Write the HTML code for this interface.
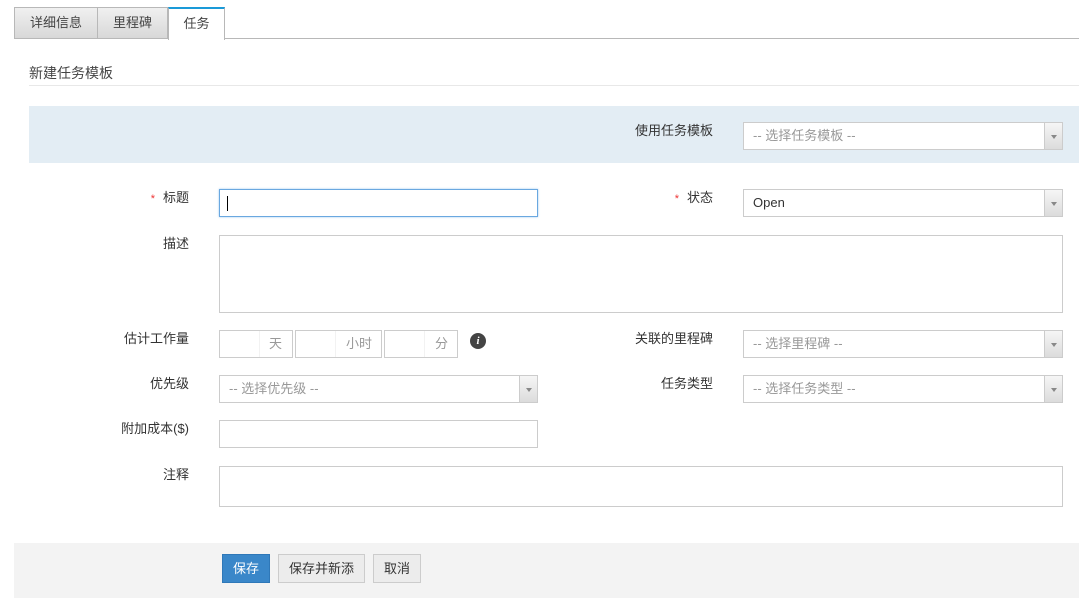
<!DOCTYPE html>
<html><head><meta charset="utf-8"><style>
*{box-sizing:border-box;margin:0;padding:0}
body{width:1079px;height:598px;background:#fff;position:relative;overflow:hidden;font-family:"Liberation Sans","Noto Sans CJK SC",sans-serif;font-size:13px;color:#333}
.a{position:absolute}
.tab{position:absolute;top:7px;height:32px;border:1px solid #b8b8b8;background:linear-gradient(#f0f0f0,#d8d8d8);text-align:center;line-height:30px;color:#444;font-size:13px}
.lbl{position:absolute;text-align:right;color:#333;font-size:13px;line-height:18px}
.lbl b{color:#e33;font-weight:normal;font-size:11px;margin-right:8px}
.in{position:absolute;border:1px solid #ccc;background:#fff}
.sel{position:absolute;border:1px solid #ccc;background:#fff;height:28px;line-height:26px;padding-left:9px;color:#999;font-size:13px}
.sel .arr{position:absolute;right:0;top:0;width:18px;height:26px;border-left:1px solid #ccc;background:linear-gradient(#f6f6f6,#dcdcdc)}
.sel .arr:after{content:"";position:absolute;left:6px;top:12px;border-left:3px solid transparent;border-right:3px solid transparent;border-top:4px solid #888}
.btn{position:absolute;top:554px;height:29px;border:1px solid #ccc;background:#ececec;line-height:27px;text-align:center;font-size:13px;color:#333}
.unit{position:absolute;color:#999;font-size:13px;line-height:26px}
</style></head><body>
<div class="tab" style="left:14px;width:84px">详细信息</div>
<div class="tab" style="left:97px;width:71px">里程碑</div>
<div class="a" style="left:168px;top:7px;width:57px;height:33px;background:#fff;border:1px solid #b8b8b8;border-top:2px solid #1a9ad8;border-bottom:none;text-align:center;line-height:30px;color:#444">任务</div>
<div class="a" style="left:224px;top:38px;width:855px;height:1px;background:#b8b8b8"></div>
<div class="a" style="left:29px;top:63px;font-size:14px;color:#444">新建任务模板</div>
<div class="a" style="left:29px;top:85px;width:1050px;height:1px;background:#e8e8e8"></div>
<div class="a" style="left:29px;top:106px;width:1050px;height:57px;background:#e3edf4"></div>
<div class="lbl" style="left:560px;width:153px;top:122px">使用任务模板</div>
<div class="sel" style="left:743px;top:122px;width:320px">-- 选择任务模板 --<span class="arr"></span></div>

<div class="lbl" style="left:60px;width:129px;top:189px"><b>*</b>标题</div>
<div class="in" style="left:219px;top:189px;width:319px;height:28px;border-color:#6aa8e0;box-shadow:0 0 2px #9cc7ee"><div class="a" style="left:7px;top:6px;width:1px;height:15px;background:#000"></div></div>
<div class="lbl" style="left:560px;width:153px;top:189px"><b>*</b>状态</div>
<div class="sel" style="left:743px;top:189px;width:320px;color:#333">Open<span class="arr"></span></div>

<div class="lbl" style="left:60px;width:129px;top:235px">描述</div>
<div class="in" style="left:219px;top:235px;width:844px;height:78px"></div>

<div class="lbl" style="left:60px;width:129px;top:330px">估计工作量</div>
<div class="in" style="left:219px;top:330px;width:74px;height:28px"><div class="a" style="left:39px;top:0;width:1px;height:26px;background:#f2f2f2"></div><span class="unit" style="left:49px">天</span></div>
<div class="in" style="left:295px;top:330px;width:87px;height:28px"><div class="a" style="left:39px;top:0;width:1px;height:26px;background:#f2f2f2"></div><span class="unit" style="left:50px">小时</span></div>
<div class="in" style="left:384px;top:330px;width:74px;height:28px"><div class="a" style="left:39px;top:0;width:1px;height:26px;background:#f2f2f2"></div><span class="unit" style="left:50px">分</span></div>
<div class="a" style="left:470px;top:333px;width:16px;height:16px;border-radius:50%;background:#444;color:#fff;font:italic bold 11px/16px 'Liberation Serif',serif;text-align:center">i</div>
<div class="lbl" style="left:560px;width:153px;top:330px">关联的里程碑</div>
<div class="sel" style="left:743px;top:330px;width:320px">-- 选择里程碑 --<span class="arr"></span></div>

<div class="lbl" style="left:60px;width:129px;top:375px">优先级</div>
<div class="sel" style="left:219px;top:375px;width:319px">-- 选择优先级 --<span class="arr"></span></div>
<div class="lbl" style="left:560px;width:153px;top:375px">任务类型</div>
<div class="sel" style="left:743px;top:375px;width:320px">-- 选择任务类型 --<span class="arr"></span></div>

<div class="lbl" style="left:60px;width:129px;top:420px">附加成本($)</div>
<div class="in" style="left:219px;top:420px;width:319px;height:28px"></div>

<div class="lbl" style="left:60px;width:129px;top:466px">注释</div>
<div class="in" style="left:219px;top:466px;width:844px;height:41px"></div>

<div class="a" style="left:14px;top:543px;width:1065px;height:55px;background:#f3f3f3"></div>
<div class="btn" style="left:222px;width:48px;background:#3a87c9;border-color:#2f78b8;color:#fff">保存</div>
<div class="btn" style="left:278px;width:87px">保存并新添</div>
<div class="btn" style="left:373px;width:48px">取消</div>
</body></html>
